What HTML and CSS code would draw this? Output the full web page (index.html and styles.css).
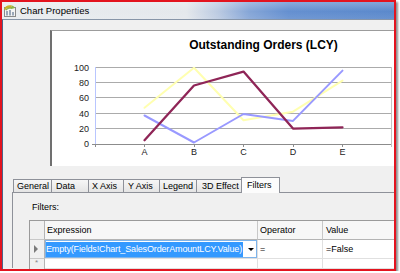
FILE: index.html
```html
<!DOCTYPE html>
<html>
<head>
<meta charset="utf-8">
<title>Chart Properties</title>
<link rel="stylesheet" href="styles.css">
</head>
<body>
<div class="window">
  <div class="titlebar">
    <svg class="app-icon" width="14" height="14" viewBox="0 0 14 14">
      <rect x="1.5" y="3.5" width="11" height="9" fill="#f4f4f4" stroke="#8a8a8a"/>
      <rect x="3" y="7" width="2" height="4.5" fill="#9aa7b8"/>
      <rect x="6" y="6" width="2" height="5.5" fill="#9aa7b8"/>
      <rect x="9" y="8" width="2" height="3.5" fill="#9aa7b8"/>
      <path d="M1 5 C2 1.5 6 0.5 9 1.5 L7.5 4 C5.5 3.5 3.5 4 2.5 6 Z" fill="#c8b42a"/>
      <path d="M2.5 6 C3.5 4 5.5 3.5 7.5 4 L9 1.5 C10.5 2 11.5 3 12 4 L8.5 5 C6.5 4.5 4.5 5 3.5 6.5 Z" fill="#8fb548"/>
    </svg>
    <span class="title">Chart Properties</span>
  </div>
  <div class="client">
    <div class="chart">
      <svg class="plot" width="342" height="135" viewBox="52 31 342 135">
        <text class="chart-title" x="263.5" y="49" text-anchor="middle">Outstanding Orders (LCY)</text>
        <g stroke="#ababab" stroke-width="1">
          <line x1="95" y1="67.5" x2="392" y2="67.5"/>
          <line x1="95" y1="82.5" x2="392" y2="82.5"/>
          <line x1="95" y1="97.5" x2="392" y2="97.5"/>
          <line x1="95" y1="113.5" x2="392" y2="113.5"/>
          <line x1="95" y1="128.5" x2="392" y2="128.5"/>
          <line x1="92" y1="144.5" x2="392" y2="144.5" stroke="#8c8c8c"/>
          <line x1="391.5" y1="67" x2="391.5" y2="147" stroke="#c4c4c4"/>
          <line x1="95.5" y1="144" x2="95.5" y2="147" stroke="#8c8c8c"/>
          <line x1="144.5" y1="144" x2="144.5" y2="147" stroke="#8c8c8c"/>
          <line x1="194.5" y1="144" x2="194.5" y2="147" stroke="#8c8c8c"/>
          <line x1="243.5" y1="144" x2="243.5" y2="147" stroke="#8c8c8c"/>
          <line x1="293.5" y1="144" x2="293.5" y2="147" stroke="#8c8c8c"/>
          <line x1="342.5" y1="144" x2="342.5" y2="147" stroke="#8c8c8c"/>
        </g>
        <line x1="95.5" y1="67" x2="95.5" y2="144" stroke="#b9c6ff" stroke-width="1"/>
        <g class="axis-label" text-anchor="end">
          <text x="89" y="70.5">100</text>
          <text x="89" y="86">80</text>
          <text x="89" y="101.3">60</text>
          <text x="89" y="116.6">40</text>
          <text x="89" y="132">20</text>
          <text x="89" y="147.3">0</text>
        </g>
        <g class="axis-label" text-anchor="middle">
          <text x="144.5" y="155">A</text>
          <text x="194" y="155">B</text>
          <text x="243.5" y="155">C</text>
          <text x="293" y="155">D</text>
          <text x="342.5" y="155">E</text>
        </g>
        <g fill="none" stroke-linejoin="round" stroke-linecap="round">
          <polyline points="144.5,107.8 194,67.8 243.5,120.3 293,111.7 342.5,80.6" stroke="#ffffb0" stroke-width="2"/>
          <polyline points="144.5,115.5 194,142.5 243.5,114 293,120.9 342.5,70.6" stroke="#9999ff" stroke-width="2"/>
          <polyline points="144.5,140.2 194,85.5 243.5,71.6 293,128.6 342.5,127.3" stroke="#8f2557" stroke-width="2.3"/>
        </g>
      </svg>
    </div>
    <div class="tabs-area">
      <div class="tabstrip">
        <div class="tab tab-general">General</div>
        <div class="tab tab-data">Data</div>
        <div class="tab tab-xaxis">X Axis</div>
        <div class="tab tab-yaxis">Y Axis</div>
        <div class="tab tab-legend">Legend</div>
        <div class="tab tab-3d">3D Effect</div>
        <div class="tab tab-filters active">Filters</div>
      </div>
      <div class="panel">
        <div class="filters-label">Filters:</div>
        <div class="grid">
          <div class="cell head rowhead"></div>
          <div class="cell head">Expression</div>
          <div class="cell head">Operator</div>
          <div class="cell head last">Value</div>

          <div class="cell rowhead"><span class="row-arrow"></span></div>
          <div class="cell expr">
            <div class="editor">
              <span class="selected-text">Empty(Fields!Chart_SalesOrderAmountLCY.Value)</span>
              <span class="drop-arrow"></span>
            </div>
          </div>
          <div class="cell">=</div>
          <div class="cell last">=False</div>

          <div class="cell rowhead newrow">*</div>
          <div class="cell"></div>
          <div class="cell"></div>
          <div class="cell last"></div>
        </div>
      </div>
    </div>
  </div>
</div>
</body>
</html>
```

FILE: styles.css
```css
html, body {
  margin: 0;
  padding: 0;
  background: #ffffff;
  font-family: "Liberation Sans", Arial, sans-serif;
  color: #000;
}

.window {
  width: 396px;
  height: 271px;
  box-sizing: border-box;
  border: 2px solid #e3141f;
  box-shadow: 2px 2px 2px rgba(0, 0, 0, 0.45);
  display: flex;
  flex-direction: column;
  overflow: hidden;
}

.titlebar {
  flex: none;
  height: 17px;
  display: flex;
  align-items: center;
  background:
    linear-gradient(to bottom, rgba(255,255,255,0.25), rgba(255,255,255,0) 55%, rgba(255,255,255,0.08)),
    linear-gradient(to right, #e9ecef 0%, #e4e8ec 47%, #bccbe2 55%, #86a6d7 63%, #6590d0 73%, #5b89cc 100%);
}

.app-icon {
  flex: none;
  margin-left: 1px;
}

.title {
  margin-left: 3px;
  font-size: 9.5px;
  line-height: 12px;
  color: #000;
}

.client {
  flex: 1;
  min-height: 0;
  background: #f0f0f0;
  border-top: 1px solid #8795a8;
  border-left: 1px solid #4b6488;
  overflow: hidden;
}

.chart {
  margin: 10px 0 0 47px;
  height: 135px;
  border-left: 2px solid #707070;
  border-top: 1px solid #9c9c9c;
  background: #ffffff;
  overflow: hidden;
}

.plot {
  display: block;
}

.chart-title {
  font-family: "Liberation Sans", Arial, sans-serif;
  font-weight: bold;
  font-size: 12px;
  fill: #000;
}

.axis-label {
  font-family: "Liberation Sans", Arial, sans-serif;
  font-size: 9px;
  fill: #222;
}

.tabs-area {
  margin: 11px 0 0 9px;
}

.tabstrip {
  height: 15px;
  padding-left: 1px;
  display: flex;
  align-items: flex-end;
  position: relative;
  z-index: 1;
}

.tab {
  box-sizing: border-box;
  height: 13px;
  margin-right: -1px;
  padding-left: 3px;
  border: 1px solid #8e9199;
  border-bottom: none;
  background: linear-gradient(to bottom, #f6f6f6, #e4e4e4);
  font-size: 9px;
  line-height: 12px;
  white-space: nowrap;
}

.tab-general { width: 39px; }
.tab-data { width: 38px; padding-left: 4px; }
.tab-xaxis { width: 36px; }
.tab-yaxis { width: 37px; padding-left: 4px; }
.tab-legend { width: 38px; }
.tab-3d { width: 46px; padding-left: 5px; }
.tab-filters { width: 39px; padding-left: 5px; }

.tab.active {
  height: 16px;
  margin-bottom: -1px;
  background: #fcfcfc;
  line-height: 14px;
}

.panel {
  height: 76px;
  box-sizing: border-box;
  border-top: 1px solid #8e9199;
  border-left: 1px solid #8e9199;
  background: #f0f0f0;
  padding: 8px 0 0 16px;
}

.filters-label {
  font-size: 9px;
  line-height: 12px;
  padding-left: 3px;
  margin-bottom: 7px;
}

.grid {
  display: grid;
  grid-template-columns: 15px 213px 65px 1fr;
  grid-template-rows: 19px 19px 10px;
  border-top: 1px solid #9a9a9a;
  border-left: 1px solid #9a9a9a;
  background: #ffffff;
}

.cell {
  box-sizing: border-box;
  border-right: 1px solid #e0e0e0;
  border-bottom: 1px solid #e0e0e0;
  font-size: 9px;
  line-height: 18px;
  padding-left: 2px;
  white-space: nowrap;
  overflow: hidden;
}

.cell.last {
  border-right: none;
  padding-left: 3px;
}

.cell.head {
  background: #f7f7f7;
  border-right-color: #c8c8c8;
  border-bottom-color: #b4b4b4;
}

.cell.rowhead {
  background: #f0f0f0;
  border-right-color: #b4b4b4;
  border-bottom-color: #c8c8c8;
  padding-left: 4px;
  display: flex;
  align-items: center;
}

.row-arrow {
  width: 0;
  height: 0;
  border-left: 4px solid #7a7a7a;
  border-top: 4px solid transparent;
  border-bottom: 4px solid transparent;
}

.cell.newrow {
  color: #888;
  font-size: 8px;
  line-height: 8px;
  padding-left: 5px;
  align-items: flex-start;
  border-bottom: none;
}

.cell.expr {
  padding: 0;
}

.editor {
  box-sizing: border-box;
  height: 18px;
  border: 1px solid #7eb4ea;
  display: flex;
  align-items: center;
}

.selected-text {
  background: #3399ff;
  color: #ffffff;
  line-height: 15px;
  padding: 0 1px 0 0;
  letter-spacing: -0.15px;
}

.drop-arrow {
  margin-left: auto;
  margin-right: 2px;
  width: 0;
  height: 0;
  border-left: 3px solid transparent;
  border-right: 3px solid transparent;
  border-top: 3px solid #000;
}
```
